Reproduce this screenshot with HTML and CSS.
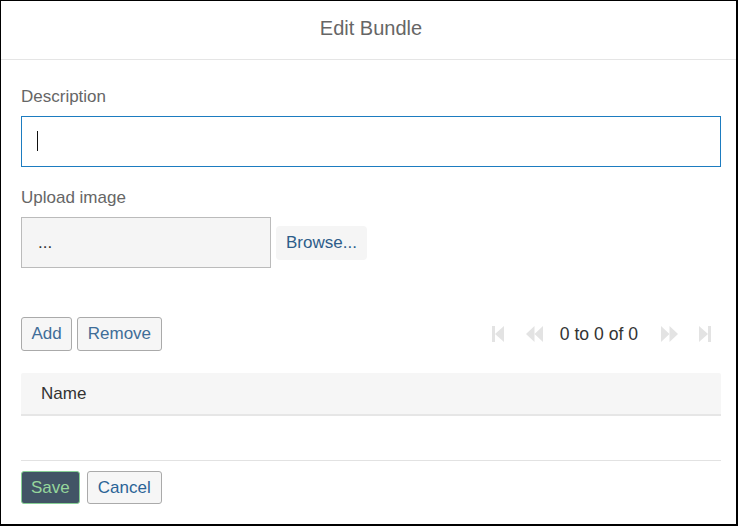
FILE: index.html
```html
<!DOCTYPE html>
<html lang="en">
<head>
<meta charset="utf-8">
<title>Edit Bundle</title>
<link rel="stylesheet" href="styles.css">
</head>
<body>
<div class="modal">
  <div class="modal-header">Edit Bundle</div>
  <div class="modal-body">
    <label class="field-label">Description</label>
    <div class="text-input"><span class="caret"></span></div>

    <label class="field-label upload-label">Upload image</label>
    <div class="upload-row">
      <div class="file-box">...</div>
      <button class="browse-btn">Browse...</button>
    </div>

    <div class="toolbar">
      <div class="actions">
        <button class="btn">Add</button>
        <button class="btn">Remove</button>
      </div>
      <div class="pager">
        <svg class="pg-icon pg-first" width="12" height="18" viewBox="0 0 12 18"><rect x="0" y="1" width="3" height="16"/><polygon points="12,1 3,9 12,17"/></svg>
        <svg class="pg-icon pg-prev" width="17" height="18" viewBox="0 0 17 18"><polygon points="8.5,1 0,9 8.5,17"/><polygon points="17,1 8.5,9 17,17"/></svg>
        <span class="pg-text">0 to 0 of 0</span>
        <svg class="pg-icon pg-next" width="17" height="18" viewBox="0 0 17 18"><polygon points="0,1 8.5,9 0,17"/><polygon points="8.5,1 17,9 8.5,17"/></svg>
        <svg class="pg-icon pg-last" width="12" height="18" viewBox="0 0 12 18"><polygon points="0,1 9,9 0,17"/><rect x="9" y="1" width="3" height="16"/></svg>
      </div>
    </div>

    <div class="grid-header">Name</div>
  </div>
  <div class="modal-footer">
    <button class="btn btn-save">Save</button>
    <button class="btn btn-cancel">Cancel</button>
  </div>
</div>
</body>
</html>
```
FILE: styles.css
```css
* { box-sizing: border-box; }

html, body {
  margin: 0;
  padding: 0;
  background: #fff;
}

body {
  font-family: "Liberation Sans", Arial, sans-serif;
  font-size: 17px;
  color: #333;
}

.modal {
  width: 738px;
  height: 526px;
  border-style: solid;
  border-color: #000;
  border-width: 1px 2px 2px 1px;
  padding: 0 15px 0 20px;
}

.modal-header {
  height: 59px;
  padding-top: 15px;
  line-height: 24px;
  font-size: 20px;
  color: #666;
  text-align: center;
  border-bottom: 1px solid #e5e5e5;
  margin: 0 -15px 0 -20px;
  padding-left: 20px;
  padding-right: 15px;
}

.modal-body {
  padding-top: 27px;
}

.field-label {
  display: block;
  line-height: 20px;
  color: #666;
  margin-bottom: 9px;
}

.upload-label {
  margin-top: 21px;
}

.text-input {
  width: 700px;
  height: 51px;
  border: 1px solid #1d7cc0;
  padding: 14px 15px 0;
}

.caret {
  display: block;
  width: 1px;
  height: 20px;
  background: #111;
}

.upload-row {
  display: flex;
  align-items: center;
  gap: 5px;
}

.file-box {
  width: 250px;
  height: 51px;
  border: 1px solid #bbb;
  background: #f5f5f5;
  padding-left: 16px;
  line-height: 49px;
  color: #333;
}

button {
  font-family: inherit;
  font-size: 17px;
  margin: 0;
  cursor: pointer;
}

.browse-btn {
  height: 34px;
  padding: 0 10px;
  border: none;
  border-radius: 4px;
  background: #f5f5f5;
  color: #2d5d8a;
}

.toolbar {
  margin-top: 49px;
  width: 700px;
  display: flex;
  justify-content: space-between;
  align-items: center;
}

.actions {
  display: flex;
  gap: 5px;
}

.btn {
  height: 34px;
  padding: 0 9.5px;
  border: 1px solid #aaa;
  border-radius: 3px;
  background: #f6f6f6;
  color: #3f6d98;
}

.pager {
  display: flex;
  align-items: center;
  padding-right: 10px;
}

.pg-icon {
  fill: #e3e3e3;
  display: block;
}

.pg-prev { margin-left: 22px; }
.pg-text { margin-left: 17px; color: #333; line-height: 20px; font-size: 17.6px; }
.pg-next { margin-left: 23px; }
.pg-last { margin-left: 21px; }

.grid-header {
  margin-top: 22px;
  width: 700px;
  height: 43px;
  background: #f6f6f6;
  border-bottom: 2px solid #e6e6e6;
  border-radius: 2px 2px 0 0;
  padding-left: 20px;
  line-height: 41px;
  color: #333;
}

.modal-footer {
  margin-top: 44px;
  width: 700px;
  border-top: 1px solid #e2e2e2;
  padding-top: 10px;
  display: flex;
  gap: 7px;
}

.modal-footer .btn {
  height: 33px;
}

.btn-save {
  background: #425466;
  border-color: #86cf95;
  color: #96d69c;
  padding: 0 9px;
}

.btn-cancel {
  color: #2a6396;
  padding: 0 10px;
}
```
